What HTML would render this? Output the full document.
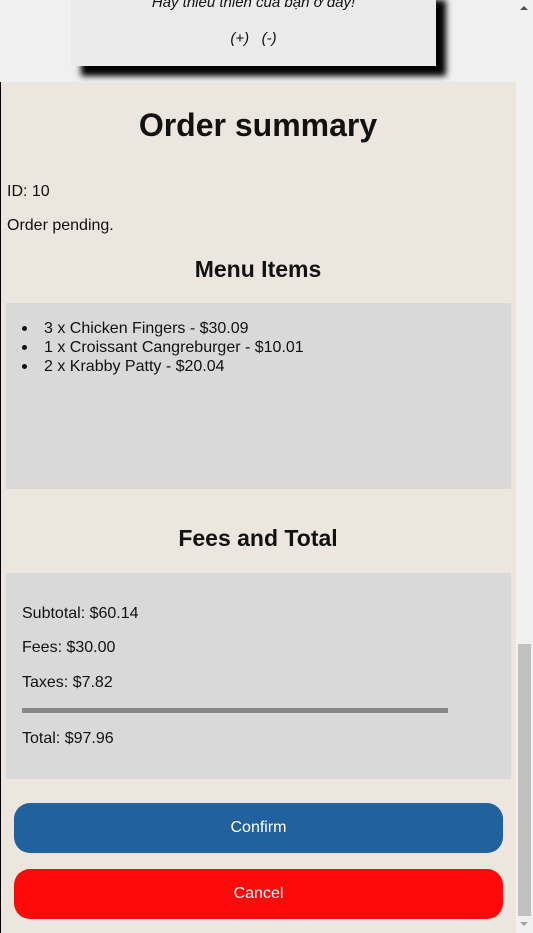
<!DOCTYPE html>
<html><head><meta charset="utf-8"><style>
*{margin:0;padding:0;box-sizing:border-box}
body{width:533px;height:933px;overflow:hidden;background:#f0f0f0;font-family:"Liberation Sans","Noto Sans CJK SC",sans-serif;position:relative;color:#111}
.a{position:absolute}
li{list-style:none;position:relative}
li:before{content:"";position:absolute;left:-22px;top:7px;width:5px;height:5px;border-radius:50%;background:#111}
</style></head><body>
<div class="a" style="left:71px;top:-10px;width:365px;height:76px;background:#ebebeb;box-shadow:10px 10px 6px #000;text-align:center;font-style:italic;font-size:15px">
<div style="position:absolute;top:4px;width:100%">Hãy thiêu thiên của bạn ở đây!</div>
<div style="position:absolute;top:40px;width:100%;font-size:15px">(+)&nbsp;&nbsp; (-)</div>
</div>
<div class="a" style="left:0;top:82px;width:516px;height:851px;background:#ede6df;border-left:1px solid #000"></div>
<div class="a" style="left:0;top:107px;width:516px;text-align:center;font-size:32px;font-weight:bold">Order summary</div>
<div class="a" style="left:7px;top:183px;font-size:16px">ID: 10</div>
<div class="a" style="left:7px;top:217px;font-size:16px">Order pending.</div>
<div class="a" style="left:0;top:256px;width:516px;text-align:center;font-size:23px;font-weight:bold">Menu Items</div>
<div class="a" style="left:6px;top:303px;width:505px;height:186px;background:#d9d9d9;font-size:16px;line-height:19px;padding:16px 0 0 38px">
<ul><li>3 x Chicken Fingers - $30.09</li><li>1 x Croissant Cangreburger - $10.01</li><li>2 x Krabby Patty - $20.04</li></ul></div>
<div class="a" style="left:0;top:525px;width:516px;text-align:center;font-size:23px;font-weight:bold">Fees and Total</div>
<div class="a" style="left:6px;top:573px;width:505px;height:206px;background:#d9d9d9;font-size:16px">
<div class="a" style="left:16px;top:32px">Subtotal: $60.14</div>
<div class="a" style="left:16px;top:66px">Fees: $30.00</div>
<div class="a" style="left:16px;top:101px">Taxes: $7.82</div>
<div class="a" style="left:16px;top:135px;width:426px;height:5px;background:#888"></div>
<div class="a" style="left:16px;top:157px">Total: $97.96</div>
</div>
<div class="a" style="left:14px;top:803px;width:489px;height:50px;background:#21629e;border-radius:16px;color:#fff;font-size:16px;text-align:center;line-height:50px">Confirm</div>
<div class="a" style="left:14px;top:869px;width:489px;height:50px;background:#ff0a0a;border-radius:16px;color:#fff;font-size:16px;text-align:center;line-height:50px">Cancel</div>
<div class="a" style="left:516px;top:0;width:17px;height:933px;background:#f1f1f1"></div>
<div class="a" style="left:518px;top:644px;width:13px;height:272px;background:#c1c1c1"></div>
<div class="a" style="left:520px;top:6px;width:0;height:0;border-left:4px solid transparent;border-right:4px solid transparent;border-bottom:4px solid #505050"></div>
<div class="a" style="left:520px;top:922px;width:0;height:0;border-left:4px solid transparent;border-right:4px solid transparent;border-top:4px solid #a3a3a3"></div>
</body></html>
